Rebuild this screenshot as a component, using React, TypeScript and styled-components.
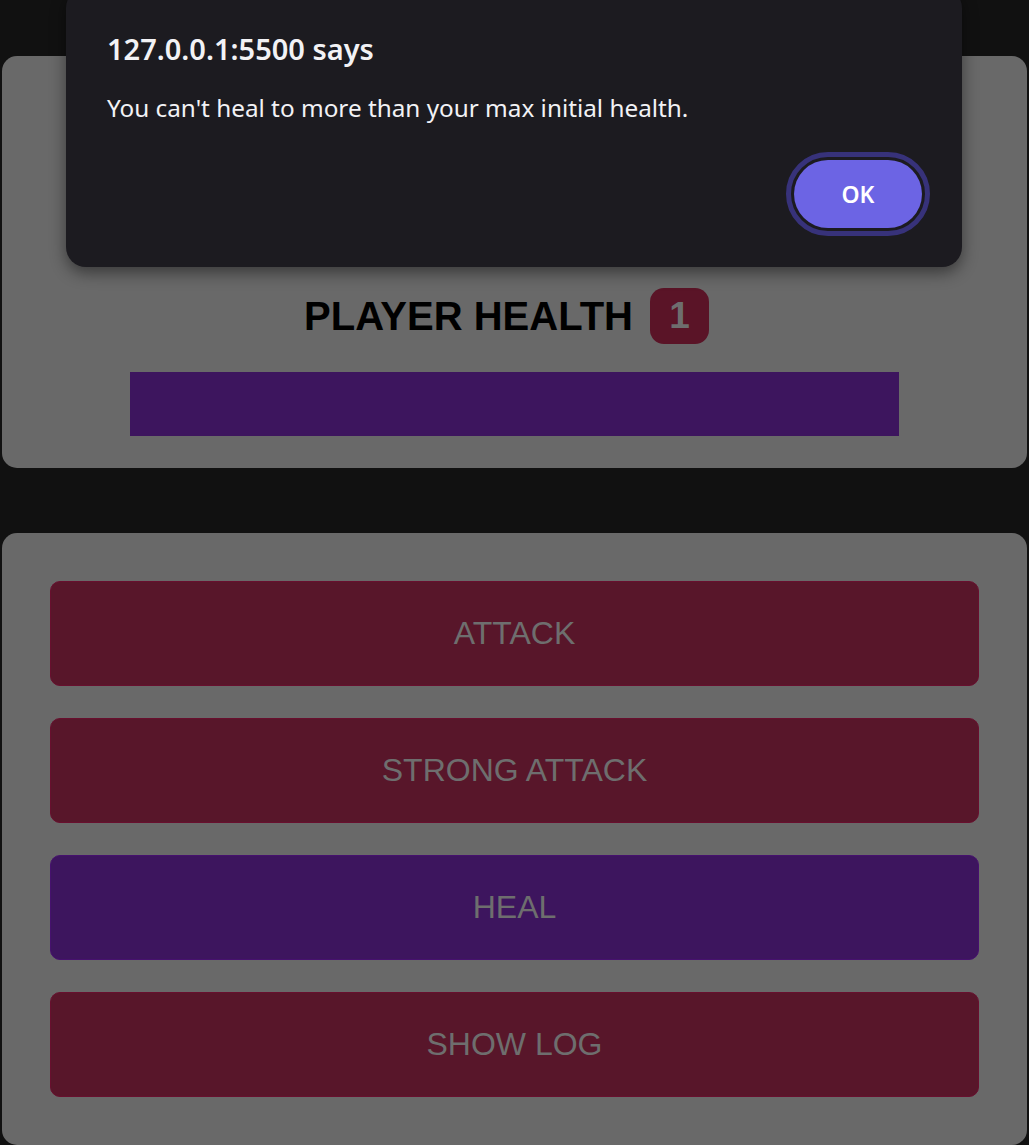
import React from "react";
import styled, { createGlobalStyle } from "styled-components";

const GlobalStyle = createGlobalStyle`
  html, body {
    margin: 0;
    padding: 0;
    background: #111111;
  }
  body {
    font-family: "Liberation Sans", Arial, sans-serif;
  }
`;

const actions = [
  { label: "ATTACK", heal: false },
  { label: "STRONG ATTACK", heal: false },
  { label: "HEAL", heal: true },
  { label: "SHOW LOG", heal: false },
];

function App() {
  return (
    <Page>
      <GlobalStyle />
      <HealthCard>
        <HealthTitle>
          PLAYER HEALTH <Bonus>1</Bonus>
        </HealthTitle>
        <HealthBar />
      </HealthCard>
      <Controls>
        {actions.map((a) => (
          <ActionButton key={a.label} heal={a.heal}>
            {a.label}
          </ActionButton>
        ))}
      </Controls>
      <Dialog>
        <DialogTitle>127.0.0.1:5500 says</DialogTitle>
        <DialogMessage>
          You can't heal to more than your max initial health.
        </DialogMessage>
        <DialogFooter>
          <OkRing>
            <OkButton>OK</OkButton>
          </OkRing>
        </DialogFooter>
      </Dialog>
    </Page>
  );
}

const Page = styled.div`
  position: relative;
  display: flex;
  flex-direction: column;
  gap: 65px;
  padding: 56px 2px 0;
  height: 1145px;
  box-sizing: border-box;
  overflow: hidden;
`;

const Card = styled.section`
  background: #696969;
  border-radius: 15px;
  box-sizing: border-box;
`;

const HealthCard = styled(Card)`
  height: 412px;
  display: flex;
  flex-direction: column;
  align-items: center;
  justify-content: flex-end;
  padding: 0 128px 32px;
`;

const HealthTitle = styled.h2`
  margin: 0 0 28px;
  display: flex;
  align-items: center;
  gap: 17px;
  font-size: 40px;
  font-weight: bold;
  color: #000;
`;

const Bonus = styled.span`
  display: inline-flex;
  align-items: center;
  justify-content: center;
  width: 59px;
  height: 56px;
  margin-right: 16px;
  border-radius: 14px;
  background: #5a1427;
  color: #6e6e6e;
  font-size: 37px;
`;

const HealthBar = styled.div`
  width: 100%;
  height: 64px;
  background: #3d155e;
`;

const Controls = styled(Card)`
  display: flex;
  flex-direction: column;
  gap: 32px;
  padding: 48px;
  height: 612px;
`;

const ActionButton = styled.button<{ heal: boolean }>`
  height: 105px;
  flex-shrink: 0;
  border: 1px solid ${({ heal }) => (heal ? "#46116e" : "#680f2e")};
  border-radius: 10px;
  background: ${({ heal }) => (heal ? "#3d155e" : "#58162a")};
  color: #6e6e6e;
  font-family: "Liberation Sans", Arial, sans-serif;
  font-size: 32px;
`;

const Dialog = styled.div`
  position: absolute;
  top: -12px;
  left: 66px;
  width: 896px;
  height: 279px;
  box-sizing: border-box;
  padding: 42px 41px 0;
  background: #1c1b20;
  border-radius: 20px;
  box-shadow: 0 6px 16px rgba(0, 0, 0, 0.45);
  font-family: "Noto Sans", "Open Sans", sans-serif;
  color: #f2f2f5;
`;

const DialogTitle = styled.div`
  font-size: 29px;
  font-weight: 600;
  line-height: 38px;
`;

const DialogMessage = styled.div`
  margin-top: 24px;
  font-size: 24.3px;
  line-height: 32px;
`;

const DialogFooter = styled.div`
  display: flex;
  justify-content: flex-end;
  margin-top: 28px;
  margin-right: -9px;
`;

const OkRing = styled.div`
  padding: 3px;
  border: 5px solid #37327a;
  border-radius: 44px;
  background: #1c1b20;
`;

const OkButton = styled.div`
  width: 128px;
  height: 68px;
  border-radius: 34px;
  background: #6c64e4;
  display: flex;
  align-items: center;
  justify-content: center;
  color: #ffffff;
  font-size: 23px;
  font-weight: 600;
`;

export default App;
